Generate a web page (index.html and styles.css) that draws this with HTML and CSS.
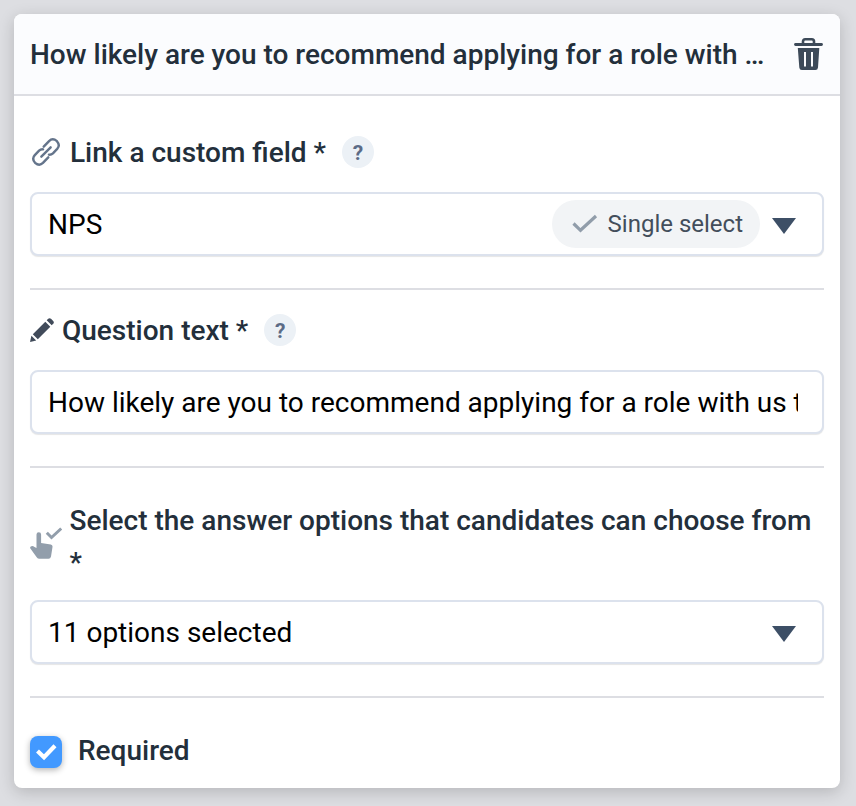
FILE: index.html
```html
<!DOCTYPE html>
<html lang="en">
<head>
  <meta charset="UTF-8" />
  <meta name="viewport" content="width=device-width, initial-scale=1.0" />
  <title>Survey question</title>
  <link rel="stylesheet" href="styles.css">
</head>
<body>
  <div class="card">
    <div class="card-header">
      <h2 class="card-title">How likely are you to recommend applying for a role with …</h2>
      <svg class="icon-trash" viewBox="0 0 30 34" width="30" height="34">
        <path d="M10 7V4.500Q10 2.200 12.200 2.200H18.800Q21 2.200 21 4.500V7" fill="none" stroke="#3d4a59" stroke-width="2.600" />
        <path d="M2.500 7.500H28.500" stroke="#3d4a59" stroke-width="2.800" stroke-linecap="round" />
        <path fill-rule="evenodd" fill="#3d4a59" d="M4.800 11H26.300L25 30.500Q24.800 33 22.400 33H8.900Q6.500 33 6.300 30.500ZM11 15V29.500H13V15ZM18 15V29.500H20V15Z" />
      </svg>
    </div>

    <div class="section section-link">
      <div class="label">
        <svg class="icon-link" viewBox="0 0 24 24" width="32" height="32">
          <g fill="none" stroke="#64748b" stroke-width="1.800" stroke-linecap="round" stroke-linejoin="round">
            <path d="M8.500 15.500L15.500 8.500" />
            <path d="M10.300 8L14.300 3.800Q17 1.200 20.200 3.900Q22.900 7 20.400 9.700L17.200 13Q15.900 14.200 14.200 14" />
            <path d="M13.700 16L9.700 20.200Q7 22.800 3.800 20.100Q1.100 17 3.600 14.300L6.800 11Q8.100 9.800 9.800 10" />
          </g>
        </svg>
        <span>Link a custom field *</span>
        <span class="help">?</span>
      </div>
      <div class="field">
        <span class="value">NPS</span>
        <span class="tag">
          <svg viewBox="0 0 26 20" width="26" height="20">
            <path d="M1.500 9.500L8.500 16.300L24 2" fill="none" stroke="#919daa" stroke-width="3.200" />
          </svg>
          Single select
        </span>
        <span class="arrow"></span>
      </div>
    </div>

    <div class="section section-text">
      <div class="label">
        <svg class="icon-pencil" viewBox="0 0 24 24" width="24" height="24">
          <path fill="#414b5a" d="M0 24L1.400 17.800L6.200 22.600ZM2.800 16.200L15.300 3.700L20.300 8.700L7.800 21.200ZM16.700 2.300L18.200 .8Q19.600 -.5 21 .8L23.200 3Q24.500 4.400 23.200 5.800L21.700 7.300Z" />
        </svg>
        <span>Question text *</span>
        <span class="help">?</span>
      </div>
      <input class="field input" type="text" value="How likely are you to recommend applying for a role with us to a friend?">
    </div>

    <div class="section section-options">
      <div class="label">
        <svg class="icon-choose" viewBox="0 0 32 32" width="32" height="32">
          <path fill="#929eab" d="M6.500 7.500a2.300 2.300 0 0 1 4.600 0V16L20.800 17.500Q22.800 18 22.500 20L21 29.500Q20.500 31.700 18.500 31.700H9Q7.400 31.700 6.500 30L.4 21.500Q-.3 20.300 .8 19.500Q2.500 18.400 4.500 20L6.500 21Z" />
          <path d="M16.800 5.800L21.500 10.500L31.200 1.500" fill="none" stroke="#929eab" stroke-width="3" />
        </svg>
        <span>Select the answer options that candidates can choose from *</span>
      </div>
      <div class="field">
        <span class="value">11 options selected</span>
        <span class="arrow"></span>
      </div>
    </div>

    <div class="required">
      <span class="checkbox">
        <svg viewBox="0 0 32 32" width="32" height="32">
          <path d="M7.500 15L14 21.200L25 9.800" fill="none" stroke="#fff" stroke-width="4.200" />
        </svg>
      </span>
      <span>Required</span>
    </div>
  </div>
</body>
</html>
```

FILE: styles.css
```css
* {
  box-sizing: border-box;
}

body {
  margin: 0;
  padding: 14px 16px 18px 14px;
  background-color: #dddee2;
  color: #232f3b;
  font-family: Roboto, sans-serif;
  font-size: 28px;
  line-height: 42px;
}

svg {
  display: block;
  flex-shrink: 0;
}

.card {
  height: 774px;
  background-color: #fff;
  border-radius: 8px;
  box-shadow: 0 4px 16px rgba(0, 0, 0, 0.18);
}

.card-header {
  display: flex;
  align-items: center;
  justify-content: space-between;
  height: 82px;
  padding: 0 17px 0 16px;
  background-color: #fbfcfe;
  border-bottom: 2px solid #dddee3;
  border-radius: 8px 8px 0 0;
}

.card-title {
  width: 740px;
  margin: 0;
  padding-top: 2px;
  font-size: 28px;
  font-weight: 500;
  white-space: nowrap;
}

.section {
  margin: 0 16px;
  padding-bottom: 32px;
  border-bottom: 2px solid #dddee3;
}

.section-link {
  padding-top: 36px;
}

.section-text {
  padding-top: 20px;
}

.section-options {
  padding-top: 32px;
}

.label {
  display: flex;
  align-items: center;
  gap: 8px;
  margin-bottom: 18px;
  font-weight: 500;
}

.section-options .label {
  gap: 7.500px;
  margin-bottom: 16px;
}

.icon-link,
.icon-pencil {
  margin-bottom: 2px;
}

.icon-choose {
  margin-top: 2px;
}

.help {
  width: 32px;
  height: 32px;
  margin: 0 0 2px 8px;
  border-radius: 50%;
  background-color: #ecf1f6;
  color: #5b6b86;
  font-size: 21px;
  font-weight: 700;
  line-height: 34px;
  text-align: center;
}

.field {
  display: flex;
  align-items: center;
  width: 100%;
  height: 64px;
  padding: 0 26px 0 16px;
  border: 2px solid #dce2ed;
  border-radius: 8px;
  background-color: #fff;
  box-shadow: 0 1px 1px rgba(0, 0, 0, 0.1);
  color: #000;
}

.input {
  padding: 0 24px 0 16px;
  font-family: inherit;
  font-size: 28px;
}

.value {
  flex: 1;
  padding-top: 2px;
}

.tag {
  display: flex;
  align-items: center;
  gap: 10px;
  height: 48px;
  margin-right: 12px;
  padding: 0 17px 0 20px;
  border-radius: 24px;
  background-color: #f2f4f6;
  color: #434e5b;
  font-size: 24px;
}

.arrow {
  margin-top: 4px;
  border: 12px solid transparent;
  border-top: 16px solid #3d4f66;
  border-bottom: 0;
}

.required {
  display: flex;
  align-items: center;
  gap: 16px;
  padding: 32px 16px 16px;
  font-weight: 500;
}

.checkbox {
  width: 32px;
  height: 32px;
  margin-top: 2px;
  border-radius: 8px;
  background-color: #4299ff;
  box-shadow: 0 2px 6px rgba(0, 0, 0, 0.3);
}
```
